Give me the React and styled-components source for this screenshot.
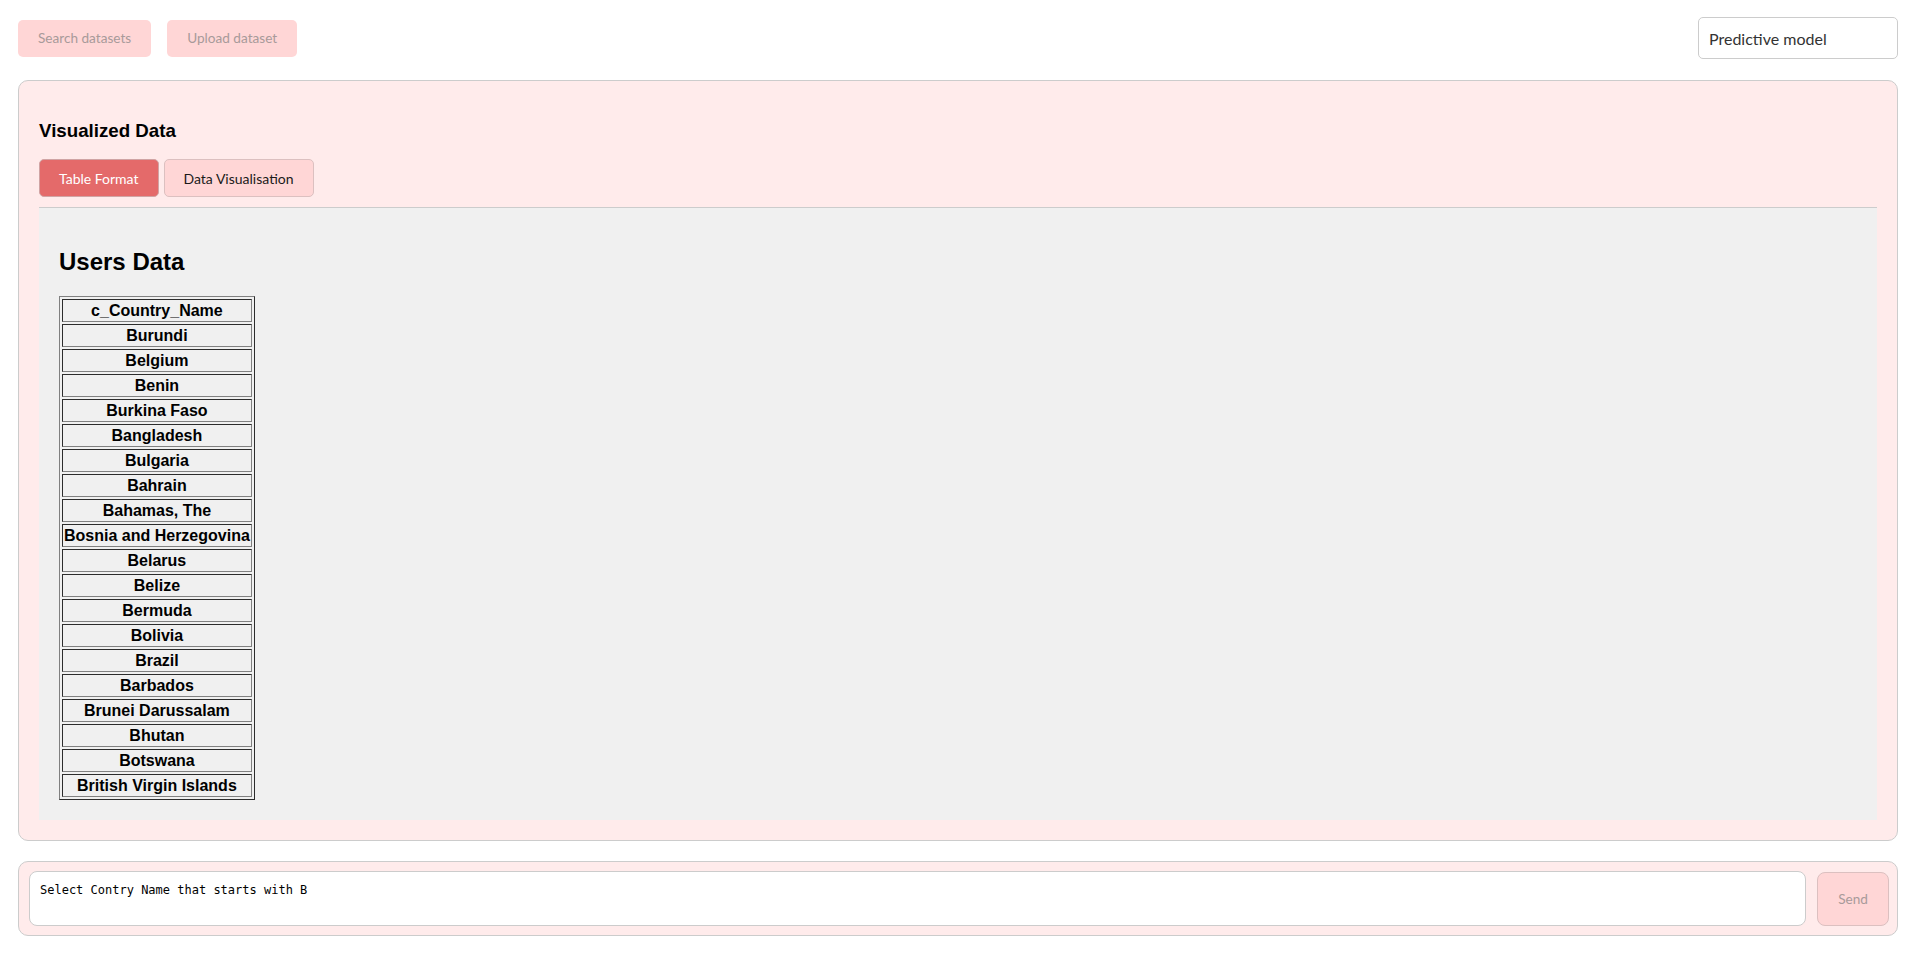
import React, { useState } from 'react';
import styled, { createGlobalStyle } from 'styled-components';

const countries = [
    'Burundi',
    'Belgium',
    'Benin',
    'Burkina Faso',
    'Bangladesh',
    'Bulgaria',
    'Bahrain',
    'Bahamas, The',
    'Bosnia and Herzegovina',
    'Belarus',
    'Belize',
    'Bermuda',
    'Bolivia',
    'Brazil',
    'Barbados',
    'Brunei Darussalam',
    'Bhutan',
    'Botswana',
    'British Virgin Islands',
];

export default function App() {

    const [ tab, setTab ] = useState('table');
    const [ query, setQuery ] = useState('Select Contry Name that starts with B');

    return (
    <>
        <GlobalStyle />
        <Page>
            <TopBar>
                <TopButton>Search datasets</TopButton>
                <TopButton>Upload dataset</TopButton>
                <ModelField readOnly value="Predictive model" />
            </TopBar>

            <Panel>
                <PanelTitle>Visualized Data</PanelTitle>
                <Tabs>
                    <Tab active={tab === 'table'} onClick={() => setTab('table')}>
                        Table Format
                    </Tab>
                    <Tab active={tab === 'chart'} onClick={() => setTab('chart')}>
                        Data Visualisation
                    </Tab>
                </Tabs>

                <DataArea>
                    <DataTitle>Users Data</DataTitle>
                    <DataTable>
                        <tbody>
                            <tr><Cell as="th">c_Country_Name</Cell></tr>
                            {countries.map(name => (
                                <tr key={name}><Cell>{name}</Cell></tr>
                            ))}
                        </tbody>
                    </DataTable>
                </DataArea>
            </Panel>

            <QueryBar>
                <QueryInput
                    value={query}
                    onChange={e => setQuery(e.target.value)}
                />
                <SendButton>Send</SendButton>
            </QueryBar>
        </Page>
    </>
    );
}

const GlobalStyle = createGlobalStyle`
  body {
    margin: 0;
    background: #fff;
    font-family: "Liberation Sans", Arial, sans-serif;
  }
`;

const Page = styled.div`
  padding: 17px 16px 20px 18px;
  display: flex;
  flex-direction: column;
`;

const TopBar = styled.div`
  display: flex;
  align-items: center;
  gap: 16px;
  margin-bottom: 21px;
`;

const TopButton = styled.button`
  height: 37px;
  padding: 0 20px;
  border: none;
  border-radius: 5px;
  background: #ffd6d6;
  color: #a89a9a;
  font-family: "Lato", "Open Sans", sans-serif;
  font-size: 13.6px;
`;

const ModelField = styled.input`
  margin-left: auto;
  width: 200px;
  height: 42px;
  box-sizing: border-box;
  padding: 0 10px;
  border: 1px solid #ccc;
  border-radius: 5px;
  background: #fff;
  color: #333;
  font-family: "Lato", "Open Sans", sans-serif;
  font-size: 16px;
  outline: none;
`;

const Panel = styled.section`
  background: #ffebeb;
  border: 1px solid #ccc;
  border-radius: 10px;
  padding: 20px;
`;

const PanelTitle = styled.h3`
  font-size: 18.72px;
  margin: 19px 0 17px;
  color: #000;
`;

const Tabs = styled.div`
  display: flex;
  gap: 5px;
  padding-bottom: 10px;
  border-bottom: 1px solid #ccc;
`;

const Tab = styled.button`
  height: 38px;
  padding: 0 19px;
  border: 1px solid ${p => p.active ? '#d0a4a4' : '#dcc0c0'};
  border-radius: 5px;
  background: ${p => p.active ? '#e46a6a' : '#ffd6d6'};
  color: ${p => p.active ? '#fff' : '#1a1a1a'};
  font-family: "Lato", "Open Sans", sans-serif;
  font-size: 14px;
  cursor: pointer;
`;

const DataArea = styled.div`
  background: #f0f0f0;
  padding: 20px;
`;

const DataTitle = styled.h2`
  font-size: 24px;
  margin: 20px 0;
  color: #000;
`;

const DataTable = styled.table`
  border: 1px outset #808080;
  border-spacing: 2px;
`;

const Cell = styled.td`
  border: 1px inset #808080;
  padding: 1px;
  font-size: 16px;
  line-height: 19px;
  font-weight: bold;
  text-align: center;
  color: #000;
  white-space: nowrap;
`;

const QueryBar = styled.div`
  margin-top: 20px;
  display: flex;
  align-items: center;
  gap: 11px;
  background: #ffebeb;
  border: 1px solid #ccc;
  border-radius: 10px;
  padding: 9px 8px 9px 10px;
`;

const QueryInput = styled.textarea`
  flex: 1;
  height: 55px;
  box-sizing: border-box;
  padding: 11px 10px 9px;
  border: 1px solid #ccc;
  border-radius: 8px;
  background: #fff;
  font-family: "DejaVu Sans Mono", monospace;
  font-size: 12px;
  color: #000;
  resize: none;
  outline: none;
`;

const SendButton = styled.button`
  width: 72px;
  height: 54px;
  border: 1px solid #dcc0c0;
  border-radius: 8px;
  background: #ffd6d6;
  color: #a89a9a;
  font-family: "Lato", "Open Sans", sans-serif;
  font-size: 13.6px;
`;
